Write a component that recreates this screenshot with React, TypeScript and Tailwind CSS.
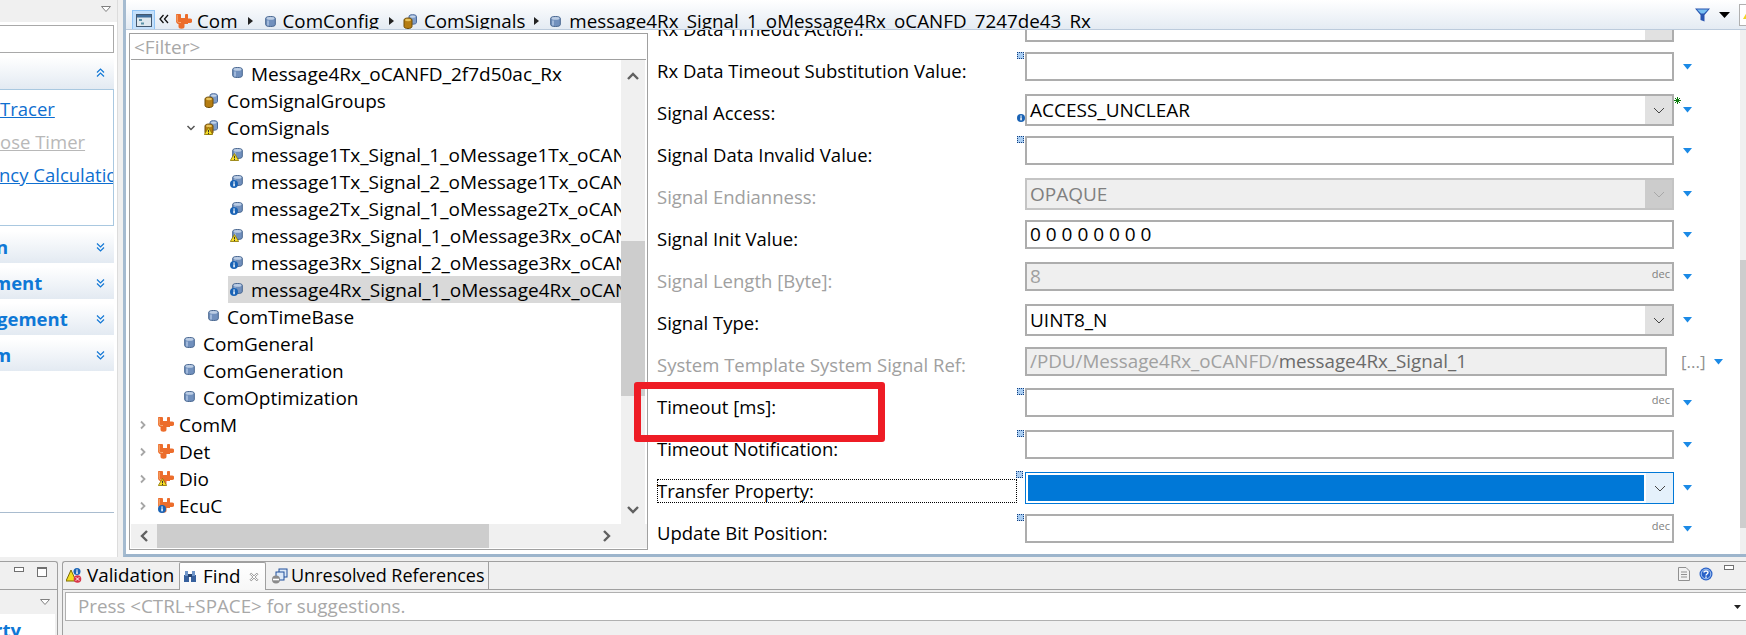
import React from 'react'

const FONT = "font-['Open_Sans','Noto_Sans',sans-serif]"

const Cylinder = () => (
  <svg width="11" height="11" viewBox="0 0 11 11" className="shrink-0">
    <path d="M.7 2.300C.7 1 3 .5 5.500.5S10.300 1 10.300 2.300v6.400c0 1.300-2.300 1.800-4.800 1.800S.7 10 .7 8.700z" fill="#7190bd" stroke="#48668f" />
    <ellipse cx="5.500" cy="2.400" rx="4" ry="1.400" fill="#bccde4" />
    <rect x="2" y="4.500" width="2" height="5" fill="#a0b8da" />
  </svg>
)

const WarnBadge = () => (
  <svg width="9" height="8" viewBox="0 0 9 8" className="absolute left-0 bottom-0">
    <path d="M4.500 .5L8.700 7.500H.3z" fill="#f7de2a" stroke="#8a7400" strokeWidth=".8" />
    <rect x="4" y="2.800" width="1" height="2.500" fill="#333" />
    <rect x="4" y="6" width="1" height="1" fill="#333" />
  </svg>
)

const InfoBadge = () => (
  <svg width="8" height="8" viewBox="0 0 8 8" className="absolute left-0 bottom-0">
    <circle cx="4" cy="4" r="4" fill="#1a63b5" />
    <rect x="3.300" y="3.300" width="1.500" height="3" fill="#fff" />
    <rect x="3.300" y="1.500" width="1.500" height="1.200" fill="#fff" />
  </svg>
)

const SignalIcon = ({ badge }: { badge?: string }) => (
  <span className="relative flex w-[13px] h-[13px] justify-end shrink-0">
    <Cylinder />
    {badge === 'warn' && <WarnBadge />}
    {badge === 'info' && <InfoBadge />}
  </span>
)

const GroupIcon = ({ badge }: { badge?: string }) => (
  <span className="relative block w-[15px] h-[15px] shrink-0">
    <svg width="15" height="15" viewBox="0 0 15 15">
      <path d="M6 2.500C6 1.300 7.500 .7 9.500 .7S13.500 1.300 13.500 2.500v6c0 1-1.500 1.700-4 1.700S6 9.500 6 8.500z" fill="#7f9cc6" stroke="#4a6a9c" />
      <ellipse cx="9.700" cy="2.600" rx="2.800" ry="1.200" fill="#c4d5ea" />
      <path d="M1 6C1 4.700 2.800 4 5 4s4 .7 4 2v6.500C9 13.800 7.200 14.500 5 14.500S1 13.800 1 12.500z" fill="#b57d12" stroke="#6e4c06" />
      <ellipse cx="5" cy="6" rx="3" ry="1.200" fill="#e7c25c" />
    </svg>
    {badge === 'warn' && <WarnBadge />}
  </span>
)

const ModuleIcon = ({ badge }: { badge?: string }) => (
  <span className="relative block w-[16px] h-[15px] shrink-0">
    <svg width="16" height="15" viewBox="0 0 16 15">
      <path d="M0 .8C0 .2 .4 0 1 0h3c.6 0 1 .3 1 .8V4h4V.8C9 .3 9.400 0 10 0h1.300c.5 0 .7.300.7.800V4.500h2A2.200 2.200 0 0 1 14 9h-2v1H8.500v2.500a3 2.200 0 0 1-6 0V10C1 10 0 8.500 0 7z" fill="#ec6d2c" />
      <path d="M1.200 1v5.500c0 1.200 .8 2 2 2H5" fill="none" stroke="#f7ad78" />
    </svg>
    {badge === 'warn' && <WarnBadge />}
    {badge === 'info' && <InfoBadge />}
  </span>
)

const Chev = ({ open }: { open?: boolean }) => (
  <svg width="10" height="10" viewBox="0 0 10 10" className="ml-[3px]">
    {open
      ? <path d="M1.500 3L5 6.500 8.500 3" fill="none" stroke="#555" strokeWidth="1.500" />
      : <path d="M3 1.500L6.500 5 3 8.500" fill="none" stroke="#a6a6a6" strokeWidth="1.800" />}
  </svg>
)

const DoubleChev = ({ up }: { up?: boolean }) => (
  <svg width="9" height="10" viewBox="0 0 9 10">
    {up
      ? <path d="M1 4.500L4.500 1 8 4.500M1 8.500L4.500 5 8 8.500" fill="none" stroke="#1278d6" strokeWidth="1.200" />
      : <path d="M1 1.500L4.500 5 8 1.500M1 5.500L4.500 9 8 5.500" fill="none" stroke="#1278d6" strokeWidth="1.200" />}
  </svg>
)

const SmallTri = () => (
  <svg width="5" height="8" viewBox="0 0 5 8" className="shrink-0"><path d="M0 0l5 4-5 4z" fill="#222" /></svg>
)

const BlueArrow = () => (
  <svg width="9" height="6" viewBox="0 0 9 6" className="shrink-0">
    <path d="M0 0h9L4.500 5.500z" fill="#1b8ae6" />
  </svg>
)

const Marker = () => (
  <span className="absolute -left-[10px] -top-[2px] w-[7px] h-[7px] bg-[#a9cdf2] border border-dotted border-[#123f80]" />
)

const ScrollArrow = ({ d }: { d: string }) => (
  <svg width="14" height="14" viewBox="0 0 14 14">
    <path d={d} fill="none" stroke="#606060" strokeWidth="2.400" />
  </svg>
)

const treeRows = [
  { label: 'Message4Rx_oCANFD_2f7d50ac_Rx', pad: 'pl-[76px]', icon: 'signal' },
  { label: 'ComSignalGroups', pad: 'pl-[52px]', icon: 'group' },
  { label: 'ComSignals', pad: 'pl-[52px]', icon: 'group', badge: 'warn', open: true },
  { label: 'message1Tx_Signal_1_oMessage1Tx_oCAN', pad: 'pl-[76px]', icon: 'signal', badge: 'warn' },
  { label: 'message1Tx_Signal_2_oMessage1Tx_oCAN', pad: 'pl-[76px]', icon: 'signal', badge: 'info' },
  { label: 'message2Tx_Signal_1_oMessage2Tx_oCAN', pad: 'pl-[76px]', icon: 'signal', badge: 'info' },
  { label: 'message3Rx_Signal_1_oMessage3Rx_oCAN', pad: 'pl-[76px]', icon: 'signal', badge: 'warn' },
  { label: 'message3Rx_Signal_2_oMessage3Rx_oCAN', pad: 'pl-[76px]', icon: 'signal', badge: 'info' },
  { label: 'message4Rx_Signal_1_oMessage4Rx_oCAN', pad: 'pl-[76px]', icon: 'signal', badge: 'info', selected: true },
  { label: 'ComTimeBase', pad: 'pl-[52px]', icon: 'signal' },
  { label: 'ComGeneral', pad: 'pl-[28px]', icon: 'signal' },
  { label: 'ComGeneration', pad: 'pl-[28px]', icon: 'signal' },
  { label: 'ComOptimization', pad: 'pl-[28px]', icon: 'signal' },
  { label: 'ComM', pad: 'pl-[4px]', icon: 'module', closed: true },
  { label: 'Det', pad: 'pl-[4px]', icon: 'module', closed: true },
  { label: 'Dio', pad: 'pl-[4px]', icon: 'module', badge: 'warn', closed: true },
  { label: 'EcuC', pad: 'pl-[4px]', icon: 'module', badge: 'info', closed: true },
]

const fields = [
  { label: 'Rx Data Timeout Action:', kind: 'combo' },
  { label: 'Rx Data Timeout Substitution Value:', kind: 'text', marker: true },
  { label: 'Signal Access:', kind: 'combo', value: 'ACCESS_UNCLEAR', info: true, star: true },
  { label: 'Signal Data Invalid Value:', kind: 'text', marker: true },
  { label: 'Signal Endianness:', kind: 'combo', value: 'OPAQUE', disabled: true },
  { label: 'Signal Init Value:', kind: 'text', value: '0 0 0 0 0 0 0 0' },
  { label: 'Signal Length [Byte]:', kind: 'text', value: '8', disabled: true, dec: true },
  { label: 'Signal Type:', kind: 'combo', value: 'UINT8_N' },
  { label: 'System Template System Signal Ref:', kind: 'ref', disabled: true },
  { label: 'Timeout [ms]:', kind: 'text', marker: true, dec: true },
  { label: 'Timeout Notification:', kind: 'text', marker: true },
  { label: 'Transfer Property:', kind: 'combo', marker: true, focused: true },
  { label: 'Update Bit Position:', kind: 'text', marker: true, dec: true },
]

type Field = (typeof fields)[number] & { value?: string, disabled?: boolean, dec?: boolean, marker?: boolean, info?: boolean, star?: boolean, focused?: boolean }

const ComboField = ({ field }: { field: Field }) => {
  const border = field.focused
    ? 'border border-[#0078d7] bg-white'
    : field.disabled ? 'border-2 border-[#c4c4c4] bg-[#efefef]' : 'border-2 border-[#adadad] bg-white'
  const button = field.focused ? 'bg-[#e5f1fb]' : field.disabled ? 'bg-[#cccccc]' : 'bg-[#e1e1e1]'
  return (
    <div className={`relative w-[649px] h-[32px] flex ${border}`}>
      {field.marker && <Marker />}
      {field.info && (
        <svg width="8" height="8" viewBox="0 0 8 8" className="absolute -left-[10px] bottom-[2px]">
          <circle cx="4" cy="4" r="4" fill="#1a63b5" />
          <rect x="3.300" y="3.300" width="1.500" height="3" fill="#fff" />
          <rect x="3.300" y="1.500" width="1.500" height="1.200" fill="#fff" />
        </svg>
      )}
      {field.star && (
        <svg width="7" height="7" viewBox="0 0 7 7" className="absolute -right-[9px] top-[1px]">
          <path d="M3.500 0v7M0 3.500h7M1 1l5 5M6 1L1 6" stroke="#0b7a0b" strokeWidth="1" />
        </svg>
      )}
      <div className={`flex-1 pl-[3px] text-[19px] leading-[28px] whitespace-nowrap ${field.disabled ? 'text-[#808080]' : 'text-black'} ${field.focused ? 'm-[2px] bg-[#0078d7]' : ''}`}>
        {field.value}
      </div>
      <div className={`w-[27px] flex items-center justify-center ${button}`}>
        <svg width="12" height="7" viewBox="0 0 12 7">
          <path d="M1 1l5 5 5-5" fill="none" stroke={field.disabled ? '#a8a8a8' : '#444'} strokeWidth="1" />
        </svg>
      </div>
    </div>
  )
}

const TextField = ({ field }: { field: Field }) => (
  <div className={`relative w-[649px] h-[29px] border-2 border-[#adadad] pl-[3px] text-[19px] leading-[25px] ${field.disabled ? 'bg-[#efefef] text-[#a0a0a0]' : 'bg-white text-black'}`}>
    {field.marker && <Marker />}
    {field.value}
    {field.dec && <span className="absolute right-[2px] top-[4px] text-[11px] leading-[12px] text-[#808080]">dec</span>}
  </div>
)

const FormRow = ({ field }: { field: Field }) => (
  <div className="flex h-[42px] shrink-0">
    <div className={`mt-[7px] mr-[8px] w-[360px] h-[24px] leading-[24px] whitespace-nowrap text-[18.500px] ${field.focused ? 'outline-1 outline-dotted -outline-offset-1 outline-black' : ''} ${field.disabled ? 'text-[#a0a0a0]' : 'text-black'}`}>
      {field.label}
    </div>
    {field.kind === 'combo' && <ComboField field={field} />}
    {field.kind === 'text' && <TextField field={field} />}
    {field.kind === 'ref' && (
      <div className="mt-px w-[642px] h-[29px] border-2 border-[#adadad] bg-[#efefef] pl-[3px] text-[18.800px] leading-[25px] text-[#a0a0a0] whitespace-nowrap">
        /PDU/Message4Rx_oCANFD/<span className="text-[#6a6a6a]">message4Rx_Signal_1</span>
      </div>
    )}
    {field.kind === 'ref'
      ? (
        <div className="flex items-center h-[29px] mt-px">
          <span className="ml-[14px] text-[#909090] text-[17px]">[...]</span>
          <span className="ml-[8px]"><BlueArrow /></span>
        </div>
      )
      : (
        <div className={`flex items-center ml-[9px] ${field.kind === 'combo' ? 'h-[32px]' : 'h-[29px]'}`}>
          <BlueArrow />
        </div>
      )}
  </div>
)

const Section = ({ label, up, shift }: { label: string, up?: boolean, shift?: string }) => (
  <div className="flex items-center justify-between h-[32px] w-[114px] pr-[9px] bg-gradient-to-b from-[#ffffff] to-[#e3eaf2] text-[18.500px] font-bold text-[#0f78d6] overflow-hidden shrink-0">
    <span className={shift}>{label}</span>
    <DoubleChev up={up} />
  </div>
)

const LeftPanel = () => (
  <div className="w-[118px] flex flex-col bg-white border-r border-[#dcdcdc] overflow-hidden shrink-0">
    <div className="h-[22px] flex items-start justify-end pr-[6px] pt-[6px] bg-[#f0f0f0]">
      <svg width="10" height="6" viewBox="0 0 10 6"><path d="M.5.500h9L5 5.500z" fill="#fff" stroke="#808080" /></svg>
    </div>
    <div className="w-[114px] h-[28px] mt-[3px] border border-[#a9a9a9] border-l-0 bg-white shrink-0" />
    <div className="h-[4px] shrink-0" />
    <Section label="" up />
    <div className="w-[114px] h-[137px] border border-l-0 border-[#a9c8e0] text-[18.500px] leading-[33px] pt-[2px] whitespace-nowrap overflow-hidden shrink-0">
      <div className="text-[#0f6fd0] underline">Tracer</div>
      <div className="text-[#b8b8b8] underline">ose Timer</div>
      <div className="text-[#0f6fd0] underline -ml-px">ncy Calculatio</div>
    </div>
    <div className="h-[5px] shrink-0" />
    <div className="flex flex-col gap-[4px]">
      <Section label="n" shift="-ml-[4px]" />
      <Section label="ment" shift="-ml-[7px]" />
      <Section label="gement" shift="-ml-[3px]" />
      <Section label="m" shift="-ml-[7px]" />
    </div>
    <div className="w-[114px] mt-[141px] border-t border-[#a9bccf]" />
  </div>
)

const TreeIcon = ({ row }: { row: (typeof treeRows)[number] }) => {
  if (row.icon === 'group') return <GroupIcon badge={row.badge} />
  if (row.icon === 'module') return <ModuleIcon badge={row.badge} />
  return <SignalIcon badge={row.badge} />
}

const Tree = () => (
  <div className="w-[519px] h-[517px] mt-[3px] ml-[3px] flex flex-col border border-[#a0a0a0] bg-white shrink-0">
    <div className="h-[26px] ml-px mr-px border-b border-[#a0a0a0] pl-[3px] text-[19px] leading-[26px] text-[#a8a8a8] shrink-0">&lt;Filter&gt;</div>
    <div className="flex h-[464px] shrink-0 ml-px">
      <div className="w-[490px] flex flex-col overflow-hidden">
        {treeRows.map((row) => (
          <div key={row.label} className={`flex items-center h-[27px] shrink-0 ${row.pad}`}>
            <div className="w-[21px] flex items-center shrink-0">
              {row.open && <Chev open />}
              {row.closed && <Chev />}
            </div>
            <div className={`flex items-center flex-1 h-[27px] whitespace-nowrap overflow-hidden text-[19px] text-black ${row.selected ? 'bg-[#d9d9d9]' : ''}`}>
              <div className={`w-[23px] flex justify-end shrink-0 ${row.icon === 'module' ? 'pr-[5px]' : 'pr-[8px]'}`}>
                <TreeIcon row={row} />
              </div>
              <span className="mt-px leading-[24px]">{row.label}</span>
            </div>
          </div>
        ))}
      </div>
      <div className="w-[24px] flex flex-col bg-[#f0f0f0] shrink-0">
        <div className="h-[181px] pt-[9px] flex justify-center shrink-0"><ScrollArrow d="M2 10l5-5 5 5" /></div>
        <div className="h-[155px] bg-[#cdcdcd] shrink-0" />
        <div className="flex-1 flex items-end justify-center pb-[7px]"><ScrollArrow d="M2 4l5 5 5-5" /></div>
      </div>
    </div>
    <div className="flex h-[24px] ml-px shrink-0 bg-[#f0f0f0]">
      <div className="w-[26px] flex items-center justify-center shrink-0"><ScrollArrow d="M10 2L5 7l5 5" /></div>
      <div className="w-[332px] bg-[#cdcdcd] shrink-0" />
      <div className="flex-1 flex items-center justify-end pr-[33px]"><ScrollArrow d="M4 2l5 5-5 5" /></div>
    </div>
  </div>
)

const Toolbar = () => (
  <div className="h-[30px] flex items-start justify-between overflow-hidden bg-gradient-to-b from-[#ffffff] to-[#e4ebf3] border-b border-[#bccbdc] shrink-0">
    <div className="flex items-center h-[42px] pl-[6px] text-[18.800px] text-black whitespace-nowrap">
      <div className="w-[23px] h-[21px] -mt-[1px] flex items-center justify-center bg-[#c4e0fb] border border-[#90c4f5]">
        <svg width="16" height="13" viewBox="0 0 16 13">
          <rect x=".5" y=".5" width="15" height="12" fill="#dfe8ee" stroke="#44586e" />
          <rect x="1" y="1" width="14" height="2.500" fill="#3f6e9c" />
          <rect x="3" y="5" width="3" height="2" fill="#5d93a8" />
          <rect x="5" y="8.500" width="3" height="2" fill="#5d93a8" />
        </svg>
      </div>
      <svg width="10" height="10" viewBox="0 0 10 10" className="ml-[4px] -mt-[5px]">
        <path d="M4.500 1L1 5l3.500 4M9 1L5.500 5 9 9" fill="none" stroke="#111" strokeWidth="1.300" />
      </svg>
      <span className="ml-[7px]"><ModuleIcon /></span>
      <span className="ml-[5px]">Com</span>
      <span className="ml-[10px]"><SmallTri /></span>
      <span className="ml-[12px]"><Cylinder /></span>
      <span className="ml-[7px]">ComConfig</span>
      <span className="ml-[10px]"><SmallTri /></span>
      <span className="ml-[9px]"><GroupIcon /></span>
      <span className="ml-[6px]">ComSignals</span>
      <span className="ml-[9px]"><SmallTri /></span>
      <span className="ml-[11px]"><Cylinder /></span>
      <span className="ml-[8px]">message4Rx_Signal_1_oMessage4Rx_oCANFD_7247de43_Rx</span>
    </div>
    <div className="flex items-center h-[29px] gap-[9px]">
      <svg width="15" height="14" viewBox="0 0 15 14">
        <path d="M0 .5h15L9.500 7v6.500L5.500 12V7z" fill="#2a55b0" />
        <path d="M2 1.500h11L9 5.500H6z" fill="#79c0f2" />
      </svg>
      <svg width="11" height="6" viewBox="0 0 11 6"><path d="M0 0h11L5.500 6z" fill="#000" /></svg>
      <div className="w-[7px] h-[22px] border border-r-0 border-[#b0b0b0] bg-white overflow-hidden pl-[3px] pt-[7px]">
        <div className="w-0 h-0 border-l-[4px] border-r-[4px] border-b-[7px] border-l-transparent border-r-transparent border-b-[#f2d422]" />
      </div>
    </div>
  </div>
)

const Editor = () => (
  <div className="flex-1 flex flex-col border-l-[3px] border-b-[3px] border-l-[#a5bbd0] border-b-[#9db5cc] bg-white min-w-0">
    <Toolbar />
    <div className="flex-1 flex min-h-0">
      <Tree />
      <div className="flex-1 overflow-hidden pl-[9px] min-w-0">
        <div className="-mt-[20px]">
          {fields.map((field) => <FormRow key={field.label} field={field as Field} />)}
        </div>
      </div>
      <div className="w-[6px] flex flex-col bg-[#f0f0f0] shrink-0">
        <div className="h-[230px] shrink-0" />
        <div className="h-[268px] bg-[#cdcdcd] shrink-0" />
      </div>
    </div>
  </div>
)

const BottomLeft = () => (
  <div className="w-[58px] flex flex-col border-t border-r border-[#a0a0a0] rounded-tr-[3px] shrink-0 overflow-hidden">
    <div className="h-[28px] flex items-start border-b border-[#a0a0a0] pl-[14px] pt-[5px] gap-[13px] shrink-0">
      <div className="w-[10px] h-[5px] border border-[#707070] bg-white" />
      <div className="w-[10px] h-[10px] border border-[#707070] border-t-2 bg-white" />
    </div>
    <div className="h-[24px] flex justify-end items-center pr-[7px] shrink-0">
      <svg width="10" height="6" viewBox="0 0 10 6"><path d="M.5.500h9L5 5.500z" fill="#fff" stroke="#808080" /></svg>
    </div>
    <div className="w-[55px] flex-1 bg-white text-[18.500px] font-bold text-[#0f78d6] leading-[28px] pt-[2px] overflow-hidden">
      <span className="-ml-[6px] block">rty</span>
    </div>
  </div>
)

const BottomRight = () => (
  <div className="flex-1 ml-[4px] flex flex-col border-l border-t border-[#a0a0a0] rounded-tl-[3px] min-w-0">
    <div className="h-[28px] flex items-end justify-between border-b border-[#a0a0a0] shrink-0">
      <div className="flex items-end h-[28px] text-[18.800px] text-black whitespace-nowrap">
        <div className="flex items-center h-[27px] pl-[3px] w-[116px] gap-[5px]">
          <span className="relative block w-[16px] h-[15px] shrink-0">
            <svg width="16" height="15" viewBox="0 0 16 15">
              <path d="M5 2L10 13H0z" fill="#f4dd20" stroke="#7a6a00" />
              <circle cx="11" cy="3.500" r="3.500" fill="#1a63b5" />
              <rect x="10.300" y="1.500" width="1.400" height="1.200" fill="#fff" />
              <rect x="10.300" y="3.200" width="1.400" height="2.800" fill="#fff" />
              <circle cx="11.500" cy="11" r="3.800" fill="#d8364a" />
              <path d="M9.800 9.300l3.400 3.400M13.200 9.300l-3.400 3.400" stroke="#fff" />
            </svg>
          </span>
          <span>Validation</span>
        </div>
        <div className="relative -mb-px flex items-center h-[28px] w-[87px] pl-[3px] pr-[6px] gap-[6px] bg-gradient-to-b from-[#ffffff] to-[#f7f7f7] border border-b-0 border-[#a0a0a0] rounded-t-[2px]">
          <svg width="14" height="13" viewBox="0 0 14 13" className="shrink-0">
            <rect x="1" y="5" width="5" height="7" fill="#38619e" />
            <rect x="8" y="5" width="5" height="7" fill="#38619e" />
            <rect x="2" y="1" width="3" height="5" fill="#6f95c9" />
            <rect x="9" y="1" width="3" height="5" fill="#6f95c9" />
            <rect x="5" y="4" width="4" height="3" fill="#26436f" />
          </svg>
          <span>Find</span>
          <svg width="10" height="10" viewBox="0 0 9 9" className="ml-auto shrink-0">
            <path d="M1 2l1-1 2.500 2.500L7 1l1 1-2.500 2.500L8 7 7 8 4.500 5.500 2 8 1 7l2.500-2.500z" fill="#fff" stroke="#8a8a8a" strokeWidth=".8" />
          </svg>
        </div>
        <div className="flex items-center h-[27px] pl-[5px] w-[223px] gap-[2px] border-r border-[#a0a0a0] text-[18px]">
          <svg width="18" height="16" viewBox="0 0 18 16" className="shrink-0">
            <rect x="8" y="1" width="8" height="8" fill="#dce8f7" stroke="#1f4f9c" />
            <rect x="5" y="4" width="8" height="8" fill="#dce8f7" stroke="#1f4f9c" />
            <circle cx="5" cy="11.500" r="4" fill="#8a8a8a" />
            <rect x="2" y="10.700" width="6" height="1.600" fill="#fff" />
          </svg>
          <span>Unresolved References</span>
        </div>
      </div>
      <div className="flex items-start h-[27px] pt-[3px] pr-[12px]">
        <svg width="12" height="14" viewBox="0 0 12 14" className="mt-[2px]">
          <path d="M.5.500H8L11.500 4v9.500H.5z" fill="#f2f2f2" stroke="#909090" />
          <path d="M3 5h6M3 7.500h6M3 10h6" stroke="#909090" />
        </svg>
        <svg width="14" height="14" viewBox="0 0 14 14" className="ml-[9px] mt-[2px]">
          <circle cx="7" cy="7" r="6.500" fill="#2a62c8" />
          <circle cx="7" cy="7" r="4.800" fill="none" stroke="#a9c8f2" />
          <path d="M5 5.500C5 3.500 9 3.500 9 5.500 9 7 7 7 7 8.500" fill="none" stroke="#fff" strokeWidth="1.400" />
          <rect x="6.300" y="9.500" width="1.400" height="1.400" fill="#fff" />
        </svg>
        <div className="ml-[11px] w-[10px] h-[5px] border border-[#707070] bg-white" />
      </div>
    </div>
    <div className="ml-[2px] mt-[2px] h-[29px] flex items-center justify-between border-y border-l border-[#b0b0b0] bg-white pl-[12px] pr-[5px] text-[18.800px] text-[#a8a8a8] shrink-0">
      <span>Press &lt;CTRL+SPACE&gt; for suggestions.</span>
      <svg width="7" height="4" viewBox="0 0 7 4"><path d="M0 0h7L3.500 4z" fill="#222" /></svg>
    </div>
  </div>
)

export default function App() {
  return (
    <div className={`relative w-[1746px] h-[635px] overflow-hidden bg-[#f0f0f0] ${FONT}`}>
      <div className="flex h-[557px]">
        <LeftPanel />
        <div className="w-[5px] shrink-0" />
        <Editor />
      </div>
      <div className="flex h-[74px] mt-[4px]">
        <BottomLeft />
        <BottomRight />
      </div>
      <div className="absolute left-[634px] top-[382px] w-[251px] h-[60px] border-[7px] border-[#ee1c25] rounded-[3px]" />
    </div>
  )
}
